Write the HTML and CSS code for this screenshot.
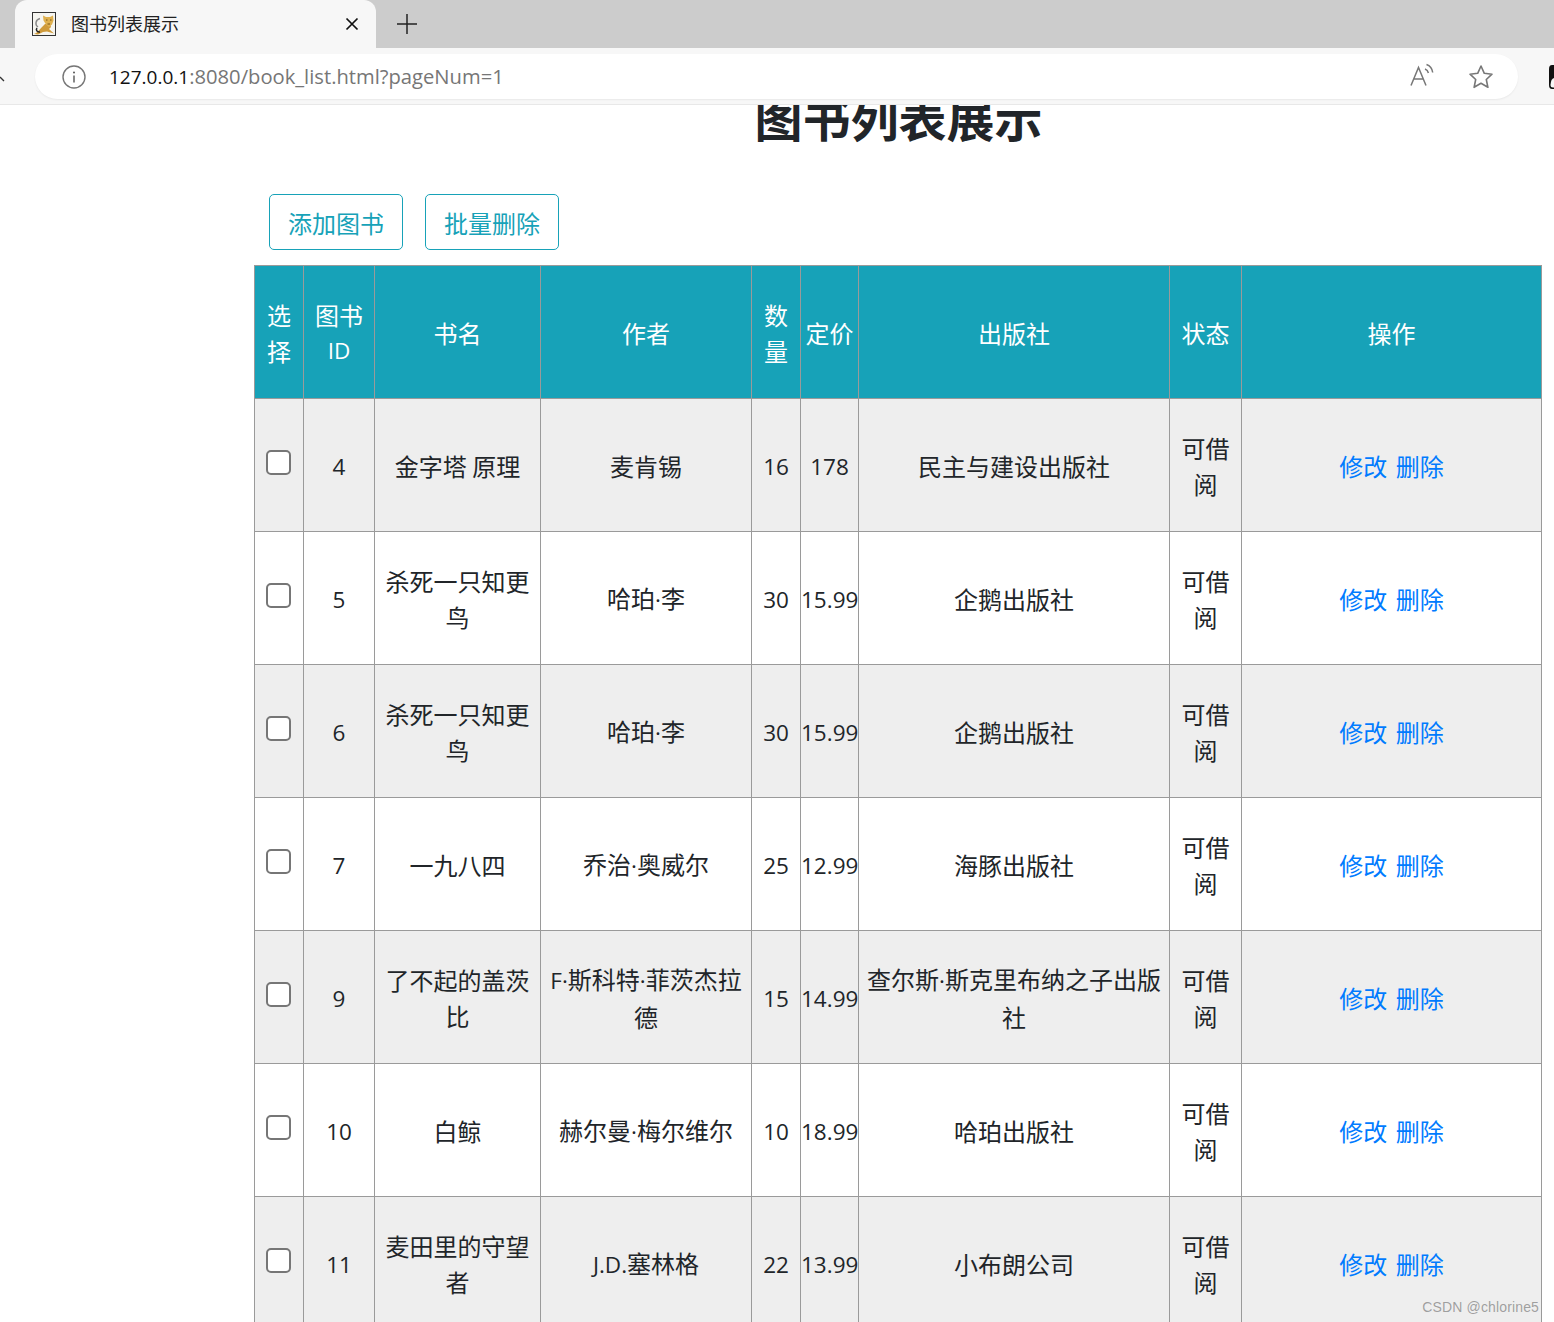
FILE: index.html
```html
<!DOCTYPE html>
<html lang="zh">
<head>
<meta charset="utf-8">
<title>图书列表展示</title>
<link rel="stylesheet" href="styles.css">
</head>
<body>
<header class="browser">
  <div class="tabstrip">
    <div class="tab">
      <svg class="favicon" width="24" height="24" viewBox="0 0 24 24">
        <rect x="0.500" y="0.500" width="23" height="23" fill="#f6f5f0" stroke="#333"/>
        <path d="M6 15C3 13 3 8 8 6.500" fill="none" stroke="#888" stroke-width="1.400"/>
        <path d="M2 22c3-1 5-4 8-7l3-3h5l1 3-2 2 5 4.500-7-2-4 .5-5 2.500z" fill="#cf9a3a"/>
        <path d="M11 3.500l3 1.500h4l3-1.500.5 5-1.500 4-3 2.500-3-2.500-2.500-4z" fill="#dfb04e"/>
        <path d="M14 8h1.500M18 8h1.500M15.500 12h2.500" stroke="#7a5515" stroke-width="1.100"/>
        <path d="M5 16c-1.500 2 0 4.500 3 4" fill="none" stroke="#222" stroke-width="1.500"/>
      </svg>
      <span class="tab-title">图书列表展示</span>
      <svg class="tab-close" width="14" height="14" viewBox="0 0 14 14"><path d="M1.500 1.500l11 11M12.500 1.500l-11 11" stroke="#111" stroke-width="1.700"/></svg>
    </div>
    <svg class="new-tab" width="22" height="22" viewBox="0 0 22 22"><path d="M11 1v20M1 11h20" stroke="#222" stroke-width="1.500"/></svg>
  </div>
  <div class="toolbar">
    <svg class="back-hint" width="6" height="10" viewBox="0 0 6 10"><path d="M0 4l4 4" stroke="#333" stroke-width="1.300" fill="none"/></svg>
    <div class="omnibox">
      <svg class="info" width="24" height="24" viewBox="0 0 24 24"><circle cx="12" cy="12" r="11" fill="none" stroke="#767676" stroke-width="1.400"/><path d="M12 10.500v7" stroke="#555" stroke-width="1.400"/><circle cx="12" cy="7.500" r="1" fill="#555"/></svg>
      <div class="url"><span class="url-host">127.0.0.1</span>:8080/book_list.html?pageNum=1</div>
      <svg class="read-aloud" width="26" height="24" viewBox="0 0 26 24"><path d="M2 22.500L9.500 4.500 17 22.500M4.800 16h9.500" fill="none" stroke="#777" stroke-width="1.500"/><path d="M16 6c1.800.6 3 2 3.400 4M17.500 1.500c3.500 1.200 5.700 4 6.200 8" fill="none" stroke="#777" stroke-width="1.500"/></svg>
      <svg class="star" width="26" height="26" viewBox="0 0 26 26"><path d="M13 2l3.300 7.300 7.700.9-5.700 5.300 1.600 7.800L13 19.300 6.100 23.300l1.600-7.800L2 10.200l7.700-.9z" fill="none" stroke="#777" stroke-width="1.600" stroke-linejoin="round"/></svg>
    </div>
    <svg class="profile-hint" width="6" height="24" viewBox="0 0 6 24"><path d="M6 0H3Q0 0 0 4v16q0 4 3 4h3z" fill="#111"/><path d="M6 13Q2 13 1.500 20q0 2.500 2.500 2.500h2z" fill="#f7f7f7"/></svg>
  </div>
</header>
<main class="page">
  <h1 class="title">图书列表展示</h1>
  <div class="actions">
    <a class="btn">添加图书</a>
    <a class="btn">批量删除</a>
  </div>
  <table class="books">
    <colgroup>
      <col class="c1"><col class="c2"><col class="c3"><col class="c4"><col class="c5"><col class="c6"><col class="c7"><col class="c8"><col class="c9">
    </colgroup>
    <thead>
      <tr><th>选择</th><th>图书<span class="lat">ID</span></th><th>书名</th><th>作者</th><th>数量</th><th>定价</th><th>出版社</th><th>状态</th><th>操作</th></tr>
    </thead>
    <tbody>
      <tr><td><input class="check" type="checkbox"></td><td class="lat">4</td><td>金字塔 原理</td><td>麦肯锡</td><td class="lat">16</td><td class="lat">178</td><td>民主与建设出版社</td><td>可借阅</td><td class="ops"><a class="link">修改</a> <a class="link">删除</a></td></tr>
      <tr><td><input class="check" type="checkbox"></td><td class="lat">5</td><td>杀死一只知更鸟</td><td>哈珀<span class="lat">·</span>李</td><td class="lat">30</td><td class="lat">15.99</td><td>企鹅出版社</td><td>可借阅</td><td class="ops"><a class="link">修改</a> <a class="link">删除</a></td></tr>
      <tr><td><input class="check" type="checkbox"></td><td class="lat">6</td><td>杀死一只知更鸟</td><td>哈珀<span class="lat">·</span>李</td><td class="lat">30</td><td class="lat">15.99</td><td>企鹅出版社</td><td>可借阅</td><td class="ops"><a class="link">修改</a> <a class="link">删除</a></td></tr>
      <tr><td><input class="check" type="checkbox"></td><td class="lat">7</td><td>一九八四</td><td>乔治<span class="lat">·</span>奥威尔</td><td class="lat">25</td><td class="lat">12.99</td><td>海豚出版社</td><td>可借阅</td><td class="ops"><a class="link">修改</a> <a class="link">删除</a></td></tr>
      <tr><td><input class="check" type="checkbox"></td><td class="lat">9</td><td>了不起的盖茨比</td><td><span class="lat">F·</span>斯科特<span class="lat">·</span>菲茨杰拉德</td><td class="lat">15</td><td class="lat">14.99</td><td>查尔斯<span class="lat">·</span>斯克里布纳之子出版社</td><td>可借阅</td><td class="ops"><a class="link">修改</a> <a class="link">删除</a></td></tr>
      <tr><td><input class="check" type="checkbox"></td><td class="lat">10</td><td>白鲸</td><td>赫尔曼<span class="lat">·</span>梅尔维尔</td><td class="lat">10</td><td class="lat">18.99</td><td>哈珀出版社</td><td>可借阅</td><td class="ops"><a class="link">修改</a> <a class="link">删除</a></td></tr>
      <tr><td><input class="check" type="checkbox"></td><td class="lat">11</td><td>麦田里的守望者</td><td><span class="lat">J.D.</span>塞林格</td><td class="lat">22</td><td class="lat">13.99</td><td>小布朗公司</td><td>可借阅</td><td class="ops"><a class="link">修改</a> <a class="link">删除</a></td></tr>
    </tbody>
  </table>
</main>
<div class="watermark">CSDN @chlorine5</div>
</body>
</html>
```
FILE: styles.css
```css
* { box-sizing: border-box; }
html, body { margin: 0; height: 1322px; overflow: hidden; background: #fff; }
body { font-family: "Noto Sans CJK SC", "Open Sans", sans-serif; color: #212529; }

.browser { height: 105px; display: flex; flex-direction: column; position: relative; z-index: 2; }
.tabstrip { height: 48px; background: #ccc; display: flex; align-items: center; padding-left: 15px; }
.tab { width: 361px; height: 48px; background: #f7f7f7; border-radius: 12px 12px 0 0; display: flex; align-items: center; padding: 0 17px 0 17px; }
.favicon { flex: none; }
.tab-title { font-size: 18px; line-height: 24px; margin: 0 0 2px 15px; flex: 1; color: #222; }
.tab-close { margin-bottom: 1px; }
.new-tab { margin: 0 0 1px 20px; }
.toolbar { height: 57px; background: #f7f7f7; border-bottom: 1px solid #e8e8e8; display: flex; align-items: flex-start; padding: 6px 0 0 0; position: relative; }
.back-hint { position: absolute; left: 0; top: 25px; }
.omnibox { margin-left: 35px; width: 1483px; height: 45px; background: #fff; border-radius: 23px; box-shadow: 0 1px 2px rgba(0,0,0,.06); display: flex; align-items: center; padding: 0 24px 0 27px; }
.url { font-family: "Open Sans", sans-serif; font-size: 20.200px; color: #767676; margin: 0 0 2px 23px; flex: 1; white-space: nowrap; }
.url-host { color: #111; font-size: 19px; }
.read-aloud { margin: -3px 33px 0 0; }
.profile-hint { position: absolute; left: 1549px; top: 17px; }

.page { height: 1217px; overflow: hidden; padding-left: 254px; }
.title { width: 1289px; margin: -13px 0 0; font-size: 48px; line-height: 48px; font-weight: 700; text-align: center; }
.actions { display: flex; gap: 22px; margin: 54px 0 15px 15px; }
.btn { width: 134px; height: 56px; padding-top: 1px; border: 1px solid #17a2b8; border-radius: 5px; color: #17a2b8; font-size: 24px; display: flex; align-items: center; justify-content: center; }

.books { width: 1287px; table-layout: fixed; border-collapse: collapse; font-size: 24px; line-height: 36px; }
.c1 { width: 49px; } .c2 { width: 71px; } .c3 { width: 166px; } .c4 { width: 211px; } .c5 { width: 49px; }
.c6 { width: 58px; } .c7 { width: 311px; } .c8 { width: 72px; } .c9 { width: 300px; }
.books th, .books td { height: 133px; border: 1px solid #9a9a9a; text-align: center; vertical-align: middle; padding: 1px 8px 0; font-weight: 400; }
.books th { background: #17a2b8; color: #fff; }
.books th:nth-child(6), .books td:nth-child(6) { padding-left: 0; padding-right: 0; }
.books tbody tr:nth-child(odd) td { background: #eee; }
.lat { font-family: "Open Sans", "Noto Sans CJK SC", sans-serif; font-size: 22.500px; }
.books td.lat { padding-top: 3px; }
th .lat { display: block; }
.check { appearance: none; width: 25px; height: 25px; margin: 0 2px 10px 0; display: inline-block; vertical-align: middle; background: #fff; border: 2px solid #767676; border-radius: 5px; }
.ops { word-spacing: 3px; }
.link { color: #007bff; }

.watermark { position: absolute; right: 15px; top: 1298px; font-family: "Liberation Sans", sans-serif; font-size: 14px; line-height: 18px; letter-spacing: .14px; color: rgba(90,90,90,.55); z-index: 3; }
```
